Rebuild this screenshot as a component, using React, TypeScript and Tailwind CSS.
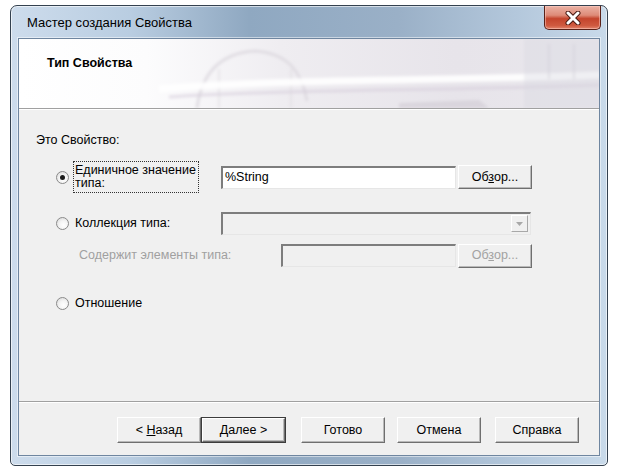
import React from "react";

const font = "font-['Liberation_Sans',Arial,sans-serif]";

function Radio({ checked }: { checked?: boolean }) {
  return (
    <span className="relative inline-flex w-[13px] h-[13px] shrink-0 rounded-full border border-[#8a8a8a] bg-[radial-gradient(circle_at_60%_65%,#ffffff_0%,#f4f4f4_45%,#d4d4d4_100%)] items-center justify-center">
      {checked && <span className="w-[5px] h-[5px] rounded-full bg-[#1b1b1b]" />}
    </span>
  );
}

function Sunken({ className, children, disabled }: { className: string; children?: React.ReactNode; disabled?: boolean }) {
  return (
    <div
      className={
        "border-t-2 border-l-2 border-t-[#7d7d7d] border-l-[#7d7d7d] border-b border-r border-b-[#e6e6e6] border-r-[#e6e6e6] flex items-center " +
        (disabled ? "bg-[#f0f0f0] " : "bg-white ") +
        className
      }
    >
      {children}
    </div>
  );
}

function Btn({ children, className, disabled, def }: { children: React.ReactNode; className: string; disabled?: boolean; def?: boolean }) {
  return (
    <div className={(def ? "border border-[#3c3c3c] " : "") + "flex " + className}>
      <div
        className={
          "flex-1 flex items-center justify-center border border-t-white border-l-white border-r-[#6f6f6f] border-b-[#6f6f6f] shadow-[inset_-1px_-1px_0_#b9b9b9] bg-[#f0f0f0] text-[12.5px] " +
          (disabled ? "text-[#a2a2a2]" : "text-black")
        }
      >
        {children}
      </div>
    </div>
  );
}

function CloseBtn() {
  return (
    <div className="absolute right-[6px] top-[0px] w-[57px] h-[24px] rounded-b-[5px] border border-t-0 border-[#5a2118] bg-[linear-gradient(180deg,#eab2a5_0%,#de8b78_40%,#c4442c_55%,#cf5a40_85%,#e2856c_100%)] shadow-[inset_0_0_0_1px_rgba(255,210,200,0.5)] flex items-center justify-center">
      <svg width="18" height="14" viewBox="0 0 18 14">
        <path d="M4 2 L14 12 M14 2 L4 12" stroke="#4a1a12" strokeWidth="5" strokeLinecap="round" />
        <path d="M4 2 L14 12 M14 2 L4 12" stroke="#ffffff" strokeWidth="3" strokeLinecap="round" />
      </svg>
    </div>
  );
}

function HeaderBg() {
  return (
    <svg className="absolute inset-0" width="581" height="69" viewBox="0 0 581 69" preserveAspectRatio="none">
      <defs>
        <linearGradient id="hg" x1="0" y1="0" x2="1" y2="0">
          <stop offset="0" stopColor="#ffffff" />
          <stop offset="0.22" stopColor="#fcfcfd" />
          <stop offset="0.45" stopColor="#efedf1" />
          <stop offset="0.75" stopColor="#e7e4ea" />
          <stop offset="1" stopColor="#e9e7ec" />
        </linearGradient>
        <filter id="bl" x="-10%" y="-50%" width="120%" height="200%">
          <feGaussianBlur stdDeviation="1.6" />
        </filter>
      </defs>
      <rect width="581" height="69" fill="url(#hg)" />
      <g filter="url(#bl)">
        <path d="M178 69 C183 32 203 14 236 12 C268 14 283 32 288 62" stroke="#dcd8de" strokeWidth="3" fill="none" opacity="0.8" />
        <path d="M200 69 L200 30 M272 69 L272 30" stroke="#e0dde2" strokeWidth="2" opacity="0.6" />
        <path d="M140 50 C260 40 420 42 581 36" stroke="#ffffff" strokeWidth="7" fill="none" opacity="0.9" />
        <path d="M150 58 C260 50 420 52 581 46" stroke="#d6cddb" strokeWidth="3" fill="none" opacity="0.6" />
        <path d="M380 64 L460 61 L470 69 L380 69 Z" fill="#cbc6d0" opacity="0.5" />
        <rect x="505" y="0" width="76" height="69" fill="#d8d7df" opacity="0.35" />
        <path d="M530 5 L530 40 M555 5 L555 40" stroke="#cfcdd6" strokeWidth="2" opacity="0.5" />
      </g>
    </svg>
  );
}

export default function App() {
  return (
    <div className={"w-[620px] h-[475px] bg-white pt-[5px] pl-[10px] " + font}>
      <div className="relative w-[598px] h-[461px] rounded-t-[7px] rounded-b-[5px] border border-[#34414f] bg-[linear-gradient(90deg,#cddcec_0%,#b9cde1_20%,#8fa8c1_40%,#9ab0c7_65%,#b4c8dc_85%,#c9daea_100%)] shadow-[inset_0_0_0_1px_rgba(255,255,255,0.6)] flex flex-col px-[7px] pb-[9px]">
        <div className="h-[32px] flex items-center pl-[9px] pt-[2px] text-[13px] text-black">
          Мастер создания Свойства
        </div>
        <CloseBtn />
        <div className="flex-1 flex flex-col border border-[#6f86a0] bg-[#f0f0f0] shadow-[0_0_0_1px_rgba(255,255,255,0.5)]">
          {/* header */}
          <div className="relative h-[70px] border-b border-b-[#a0a0a0] overflow-hidden">
            <HeaderBg />
            <div className="relative pl-[28px] pt-[15px] text-[12.5px] font-bold text-black">Тип Свойства</div>
          </div>
          <div className="h-px bg-white" />
          {/* content */}
          <div className="flex-1 flex flex-col pl-[17px] pt-[23px] text-[12.5px] text-black">
            <div className="leading-[15px]">Это Свойство:</div>
            <div className="flex flex-col pl-[20px] mt-[13px]">
              {/* row 1 */}
              <div className="flex items-center h-[32px]">
                <Radio checked />
                <div className="ml-[4px] w-[126px] h-[32px] border border-dotted border-[#333] pl-[1px] leading-[13px] pt-[2px]">
                  Единичное значение
                  <br />
                  типа:
                </div>
                <Sunken className="ml-[22px] w-[235px] h-[23px] pl-[2px]">%String</Sunken>
                <Btn className="ml-[2px] w-[74px] h-[24px]">
                  <span>
                    Об<span className="underline">з</span>ор...
                  </span>
                </Btn>
              </div>
              {/* row 2 */}
              <div className="flex items-center h-[24px] mt-[18px]">
                <Radio />
                <div className="ml-[6px] w-[146px]">Коллекция типа:</div>
                <Sunken disabled className="w-[310px] h-[23px] justify-end pr-[2px]">
                  <div className="w-[17px] h-[17px] border border-t-white border-l-white border-r-[#a8a8a8] border-b-[#a8a8a8] bg-[#f0f0f0] flex items-center justify-center">
                    <svg width="7" height="4" viewBox="0 0 7 4">
                      <path d="M0 0 L7 0 L3.5 4 Z" fill="#a8a8a8" />
                    </svg>
                  </div>
                </Sunken>
              </div>
              {/* row 3 */}
              <div className="flex items-center h-[23px] mt-[9px]">
                <div className="ml-[23px] w-[202px] text-[#a0a0a0]">Содержит элементы типа:</div>
                <Sunken disabled className="w-[175px] h-[23px]" />
                <Btn disabled className="ml-[2px] w-[74px] h-[24px]">
                  <span>
                    Об<span className="underline">з</span>ор...
                  </span>
                </Btn>
              </div>
              {/* row 4 */}
              <div className="flex items-center h-[16px] mt-[28px]">
                <Radio />
                <div className="ml-[6px]">Отношение</div>
              </div>
            </div>
          </div>
          {/* separator */}
          <div className="h-px bg-[#a0a0a0]" />
          <div className="h-px bg-white" />
          {/* footer */}
          <div className="h-[52px] flex items-start pt-[14px] pl-[98px]">
            <Btn className="w-[84px] h-[26px]">
              <span>
                &lt; <span className="underline">Н</span>азад
              </span>
            </Btn>
            <Btn def className="w-[85px] h-[26px]">
              <span>
                <span className="underline">Д</span>алее &gt;
              </span>
            </Btn>
            <Btn className="ml-[15px] w-[84px] h-[26px]">Готово</Btn>
            <Btn className="ml-[12px] w-[84px] h-[26px]">Отмена</Btn>
            <Btn className="ml-[14px] w-[84px] h-[26px]">Справка</Btn>
          </div>
        </div>
      </div>
    </div>
  );
}
